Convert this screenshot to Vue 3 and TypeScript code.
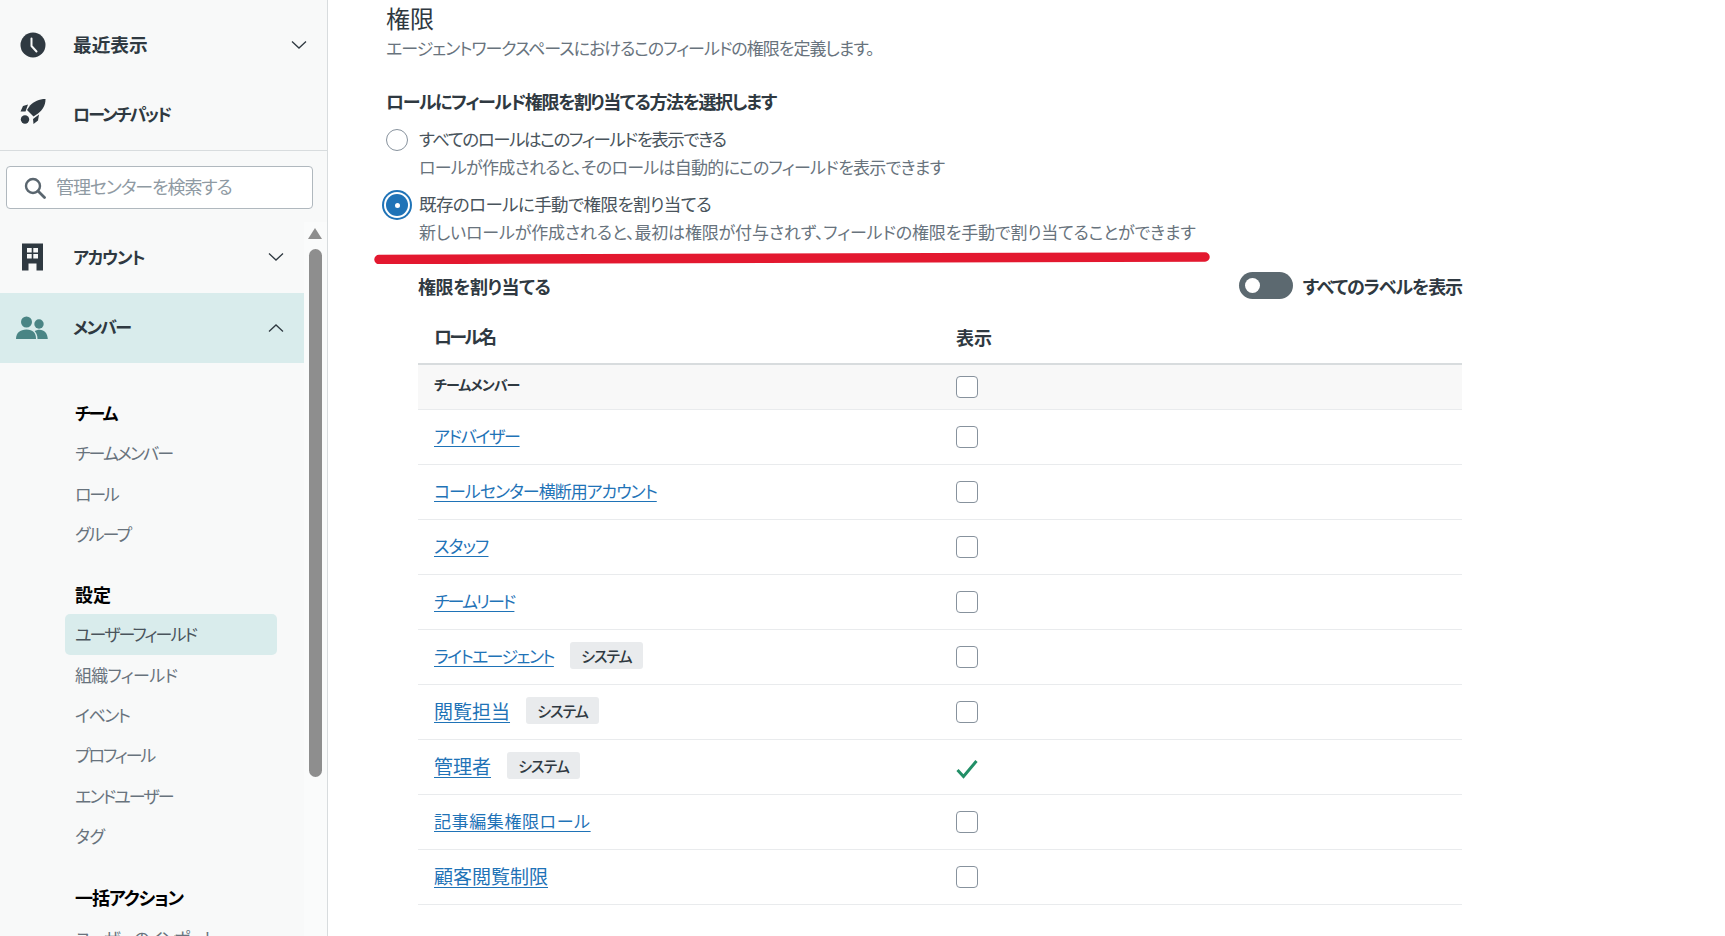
<script setup lang="ts">
// ls = letter spacing that brings each label to its width in the screenshot
const teamItems = [
  { label: 'チームメンバー', ls: -1.9 },
  { label: 'ロール', ls: -2.3 },
  { label: 'グループ', ls: -1.8 },
];

const settingsItems = [
  { label: 'ユーザーフィールド', ls: -1.9 },
  { label: '組織フィールド', ls: -0.7 },
  { label: 'イベント', ls: -1.5 },
  { label: 'プロフィール', ls: -2.1 },
  { label: 'エンドユーザー', ls: -1.9 },
  { label: 'タグ', ls: -0.3 },
];

const roles = [
  { name: 'アドバイザー', ls: -1.3, kanji: false, system: false, checked: false },
  { name: 'コールセンター横断用アカウント', ls: -1, kanji: false, system: false, checked: false },
  { name: 'スタッフ', ls: -0.8, kanji: false, system: false, checked: false },
  { name: 'チームリード', ls: -1.9, kanji: false, system: false, checked: false },
  { name: 'ライトエージェント', ls: -1.6, kanji: false, system: true, checked: false },
  { name: '閲覧担当', ls: 0, kanji: true, system: true, checked: false },
  { name: '管理者', ls: 0, kanji: true, system: true, checked: true },
  { name: '記事編集権限ロール', ls: 0.6, kanji: false, system: false, checked: false },
  { name: '顧客閲覧制限', ls: 0, kanji: true, system: false, checked: false },
];
</script>

<template>
  <div class="page">
    <aside class="sidebar">
      <div class="top-nav">
        <div class="nav-row">
          <svg class="nav-icon" viewBox="0 0 26 26" width="26" height="26">
            <circle cx="13" cy="13" r="12.5" fill="#2f3941" />
            <path d="M11.500 6.500V14l5 5.500" fill="none" stroke="#f8f9f9" stroke-width="2" stroke-linecap="round" stroke-linejoin="round" />
          </svg>
          <span class="nav-label kanji-label">最近表示</span>
          <svg class="chevron" viewBox="0 0 16 10" width="16" height="10">
            <path d="M1 1.500l7 6.500 7-6.500" fill="none" stroke="#2f3941" stroke-width="1.300" />
          </svg>
        </div>
        <div class="nav-row">
          <svg class="nav-icon rocket" viewBox="0 0 26 26" width="26" height="26">
            <path d="M25.500 0C19 0 14 2.500 10 6.500L7 11l6.500 6.500 4.500-3C23 10.500 25.500 6 25.500 0z" fill="#2f3941" />
            <path d="M8 5.500L3 7 .5 12.500h5zM19 15.500l-1 6-4.500 3.500-.5-5z" fill="#2f3941" />
            <circle cx="5" cy="20.500" r="4.200" fill="#2f3941" />
          </svg>
          <span class="nav-label launch">ローンチパッド</span>
        </div>
      </div>

      <div class="search-wrap">
        <div class="search">
          <svg viewBox="0 0 22 22" width="22" height="22">
            <circle cx="9" cy="9" r="7" fill="none" stroke="#5a666f" stroke-width="2.400" />
            <path d="M14 14l6.500 6.500" stroke="#5a666f" stroke-width="2.800" stroke-linecap="round" />
          </svg>
          <span class="search-text">管理センターを検索する</span>
        </div>
      </div>

      <div class="nav-scroll">
        <div class="nav-main">
          <div class="nav-row account">
            <svg class="nav-icon" viewBox="0 0 26 28" width="26" height="28">
              <path fill-rule="evenodd" d="M2 0.500h21v27h-6.500v-7h-8v7H2zM7 5v4.500h4.700V5zM13.300 5v4.500H18V5zM7 11v4.500h4.700V11zM13.300 11v4.500H18V11z" fill="#2f3941" />
            </svg>
            <span class="nav-label account-label">アカウント</span>
            <svg class="chevron" viewBox="0 0 16 10" width="16" height="10">
              <path d="M1 1.500l7 6.500 7-6.500" fill="none" stroke="#2f3941" stroke-width="1.300" />
            </svg>
          </div>
          <div class="nav-row member">
            <svg class="nav-icon members" viewBox="0 0 32 24" width="32" height="24">
              <circle cx="10.500" cy="6" r="5.500" fill="#4a8585" />
              <circle cx="23" cy="8" r="4.700" fill="#4a8585" />
              <path d="M0 23c0-6 4-9.500 10.500-9.500S20 17 20 23z" fill="#4a8585" />
              <path d="M21.500 23c0-3.500-1-6-2.800-7.800 1.300-1 2.800-1.500 4.800-1.500 5 0 8 3.500 8.300 9.300z" fill="#4a8585" />
            </svg>
            <span class="nav-label member-label">メンバー</span>
            <svg class="chevron" viewBox="0 0 16 10" width="16" height="10">
              <path d="M1 8.500L8 2l7 6.500" fill="none" stroke="#2f3941" stroke-width="1.300" />
            </svg>
          </div>

          <div class="subnav">
            <div class="sub-title team-title">チーム</div>
            <div
              v-for="item in teamItems"
              :key="item.label"
              class="sub-item"
              :style="{ letterSpacing: item.ls + 'px' }"
            >
              {{ item.label }}
            </div>

            <div class="sub-title group">設定</div>
            <div
              v-for="(item, i) in settingsItems"
              :key="item.label"
              class="sub-item"
              :class="{ active: i === 0 }"
              :style="{ letterSpacing: item.ls + 'px' }"
            >
              {{ item.label }}
            </div>

            <div class="sub-title group bulk-title">一括アクション</div>
            <div class="sub-item import">ユーザーのインポート</div>
          </div>
        </div>

        <div class="scrollbar">
          <div class="scroll-arrow"></div>
          <div class="scroll-thumb"></div>
        </div>
      </div>
    </aside>

    <main class="content">
      <h2 class="title">権限</h2>
      <p class="hint title-hint">エージェントワークスペースにおけるこのフィールドの権限を定義します。</p>

      <h3 class="strong-label method">ロールにフィールド権限を割り当てる方法を選択します</h3>

      <div class="option">
        <span class="radio"></span>
        <div>
          <div class="option-label all-label">すべてのロールはこのフィールドを表示できる</div>
          <div class="hint all-hint">ロールが作成されると、そのロールは自動的にこのフィールドを表示できます</div>
        </div>
      </div>
      <div class="option second">
        <span class="radio selected"></span>
        <div>
          <div class="option-label manual-label">既存のロールに手動で権限を割り当てる</div>
          <div class="hint manual-hint">新しいロールが作成されると、最初は権限が付与されず、フィールドの権限を手動で割り当てることができます</div>
        </div>
      </div>

      <svg class="red-line" viewBox="0 0 836 12" width="836" height="12">
        <path d="M5 7.500L831 5" stroke="#e3182f" stroke-width="9.500" stroke-linecap="round" />
      </svg>

      <section class="assign">
        <div class="assign-head">
          <span class="strong-label assign-label">権限を割り当てる</span>
          <div class="toggle-wrap">
            <span class="toggle"><span class="knob"></span></span>
            <span class="strong-label show-label">すべてのラベルを表示</span>
          </div>
        </div>

        <div class="table-head">
          <span class="col-name head-name">ロール名</span>
          <span class="col-view">表示</span>
        </div>
        <div class="row first">
          <span class="col-name small-bold">チームメンバー</span>
          <span class="col-view"><span class="box"></span></span>
        </div>
        <div v-for="role in roles" :key="role.name" class="row">
          <span class="col-name">
            <a class="role-link" :class="{ kanji: role.kanji }" :style="{ letterSpacing: role.ls + 'px' }">{{ role.name }}</a>
            <span v-if="role.system" class="badge">システム</span>
          </span>
          <span class="col-view">
            <svg v-if="role.checked" class="check" viewBox="0 0 22 20" width="22" height="20">
              <path d="M1.500 11l6 6.500L20.500 2" fill="none" stroke="#228f67" stroke-width="3" />
            </svg>
            <span v-else class="box"></span>
          </span>
        </div>
      </section>
    </main>
  </div>
</template>

<style scoped>
.page {
  display: flex;
  font-family: "Noto Sans CJK JP", "Noto Sans", sans-serif;
  font-feature-settings: "palt";
  height: 936px;
  overflow: hidden;
}

/* Sidebar */
.sidebar {
  background-color: #f8f9f9;
  border-right: 1px solid #d8dcde;
  display: flex;
  flex-direction: column;
  flex-shrink: 0;
  width: 327px;
}

.top-nav {
  border-bottom: 1px solid #d8dcde;
  box-sizing: border-box;
  flex-shrink: 0;
  height: 151px;
  padding-top: 10px;
}

.nav-row {
  align-items: center;
  display: flex;
  height: 69px;
  padding-left: 20px;
  position: relative;
}

.nav-row.account,
.nav-row.member {
  height: 70.5px;
}

.nav-row.member {
  background-color: #d9ecec;
  padding-left: 16px;
}

.nav-icon {
  flex-shrink: 0;
  width: 26px;
}

.nav-icon.rocket {
  margin-bottom: 4px;
}

.nav-icon.members {
  width: 32px;
}

.nav-label {
  color: #2f3941;
  font-size: 17px;
  font-weight: 700;
  left: 73px;
  padding-bottom: 2px;
  position: absolute;
}

.kanji-label {
  font-size: 18.700px;
}

.launch {
  letter-spacing: -1.900px;
  padding-bottom: 0;
}

.account-label {
  letter-spacing: -1.200px;
}

.member-label {
  letter-spacing: -1.700px;
}

.chevron {
  position: absolute;
  right: 20px;
}

.search-wrap {
  box-sizing: border-box;
  flex-shrink: 0;
  height: 71px;
  padding: 15px 14px 0 6px;
}

.search {
  align-items: center;
  background-color: #fff;
  border: 1px solid #b0b8be;
  border-radius: 4px;
  box-sizing: border-box;
  color: #8f9aa3;
  display: flex;
  font-size: 18px;
  gap: 10px;
  height: 43px;
  padding-left: 17px;
}

.search-text {
  letter-spacing: -1.100px;
  padding-bottom: 4px;
}

.nav-scroll {
  display: flex;
  flex: 1;
  min-height: 0;
  overflow: hidden;
}

.nav-main {
  flex-shrink: 0;
  width: 304px;
}

.subnav {
  padding-top: 30px;
}

.sub-title {
  color: #000;
  font-size: 18px;
  font-weight: 700;
  line-height: 40.300px;
  padding-left: 75px;
}

.team-title {
  font-size: 17px;
  letter-spacing: -2px;
}

.bulk-title {
  letter-spacing: -1.100px;
}

.sub-title.group {
  margin-top: 20px;
}

.sub-title.bulk-title {
  margin-top: 21px;
}

.sub-item {
  color: #68737d;
  font-size: 17px;
  height: 40.300px;
  line-height: 39px;
  margin-left: 65px;
  padding-left: 10px;
  width: 202px;
}

.sub-item.import {
  letter-spacing: -1.900px;
}

.sub-item.active {
  background-color: #d9ecec;
  border-radius: 5px;
  color: #49545c;
}

.scrollbar {
  background-color: #fafbfb;
  flex: 1;
  padding-top: 6px;
}

.scroll-arrow {
  border-bottom: 11px solid #8e8e8e;
  border-left: 7.500px solid transparent;
  border-right: 7.500px solid transparent;
  height: 0;
  margin-left: 4px;
  width: 0;
}

.scroll-thumb {
  background-color: #8e8e8e;
  border-radius: 7px;
  height: 528px;
  margin: 10px 0 0 5px;
  width: 13px;
}

/* Content */
.content {
  flex: 1;
  min-width: 0;
  padding-left: 58px;
}

.title {
  color: #2f3941;
  font-size: 24px;
  font-weight: 400;
  line-height: 30px;
  margin: 3px 0 0;
}

.hint {
  color: #68737d;
  font-size: 17px;
  line-height: 28px;
}

.title-hint {
  letter-spacing: -1px;
  margin: 1px 0 0;
}

.strong-label {
  color: #2f3941;
  font-size: 18px;
  font-weight: 700;
}

.method {
  letter-spacing: -1.400px;
  line-height: 28px;
  margin: 25px 0 0;
}

.option {
  display: flex;
  gap: 11px;
  margin-top: 10px;
}

.option.second {
  margin-top: 9px;
}

.option-label {
  color: #49545c;
  font-size: 17.500px;
  line-height: 28px;
}

.all-label {
  letter-spacing: -1.500px;
}

.manual-label {
  letter-spacing: -0.600px;
}

.all-hint {
  letter-spacing: -0.720px;
}

.manual-hint {
  letter-spacing: -0.150px;
}

.radio {
  background-color: #fff;
  border: 1px solid #87929d;
  border-radius: 50%;
  box-sizing: border-box;
  flex-shrink: 0;
  height: 22px;
  margin-top: 4px;
  position: relative;
  width: 22px;
}

.radio.selected {
  background-color: #1f73b7;
  border: none;
  box-shadow: 0 0 0 2px #fff, 0 0 0 4px #1f73b7;
}

.radio.selected::after {
  background-color: #fff;
  border-radius: 50%;
  content: "";
  height: 5px;
  left: 8.500px;
  position: absolute;
  top: 8.500px;
  width: 5px;
}

.red-line {
  display: block;
  margin: 6px 0 0 -12px;
}

.assign {
  margin: 0 0 0 32px;
  width: 1044px;
}

.assign-head {
  align-items: center;
  display: flex;
  height: 39px;
  justify-content: space-between;
  margin-top: 2px;
}

.assign-label {
  letter-spacing: -0.400px;
}

.show-label {
  letter-spacing: -1.100px;
}

.toggle-wrap {
  align-items: center;
  display: flex;
  gap: 10px;
}

.toggle {
  background-color: #5c6970;
  border-radius: 14px;
  display: block;
  height: 27px;
  position: relative;
  width: 54px;
}

.knob {
  background-color: #fff;
  border-radius: 50%;
  height: 15px;
  left: 6px;
  position: absolute;
  top: 6px;
  width: 15px;
}

.table-head,
.row {
  align-items: center;
  box-sizing: border-box;
  display: flex;
}

.table-head {
  border-bottom: 2px solid #d8dcde;
  color: #2f3941;
  font-size: 18px;
  font-weight: 700;
  height: 60px;
  padding-top: 6px;
}

.head-name {
  letter-spacing: -2.800px;
}

.row {
  border-bottom: 1px solid #e9ebed;
  height: 55px;
}

.row.first {
  background-color: #f8f8f8;
  height: 45px;
}

.col-name {
  align-items: center;
  display: flex;
  gap: 16px;
  margin-left: 16px;
  padding-bottom: 3px;
  width: 522px;
}

.col-view {
  align-items: center;
  display: flex;
}

.small-bold {
  color: #2f3941;
  font-size: 14px;
  font-weight: 700;
  letter-spacing: -0.900px;
  padding-bottom: 6px;
}

.role-link {
  color: #1f73b7;
  font-size: 17px;
  text-decoration: underline;
  text-underline-offset: 3px;
}

.role-link.kanji {
  font-size: 19px;
}

.badge {
  align-items: center;
  background-color: #e9ebed;
  border-radius: 3px;
  color: #2f3941;
  display: flex;
  font-size: 15px;
  font-weight: 500;
  height: 27px;
  justify-content: center;
  letter-spacing: -1px;
  width: 73px;
}

.box {
  background-color: #fff;
  border: 1px solid #87929d;
  border-radius: 4px;
  box-sizing: border-box;
  display: block;
  height: 22px;
  width: 22px;
}

.check {
  display: block;
  margin-top: 3px;
}
</style>

<style>
body {
  background-color: #fff;
  overflow: hidden;
}
</style>
